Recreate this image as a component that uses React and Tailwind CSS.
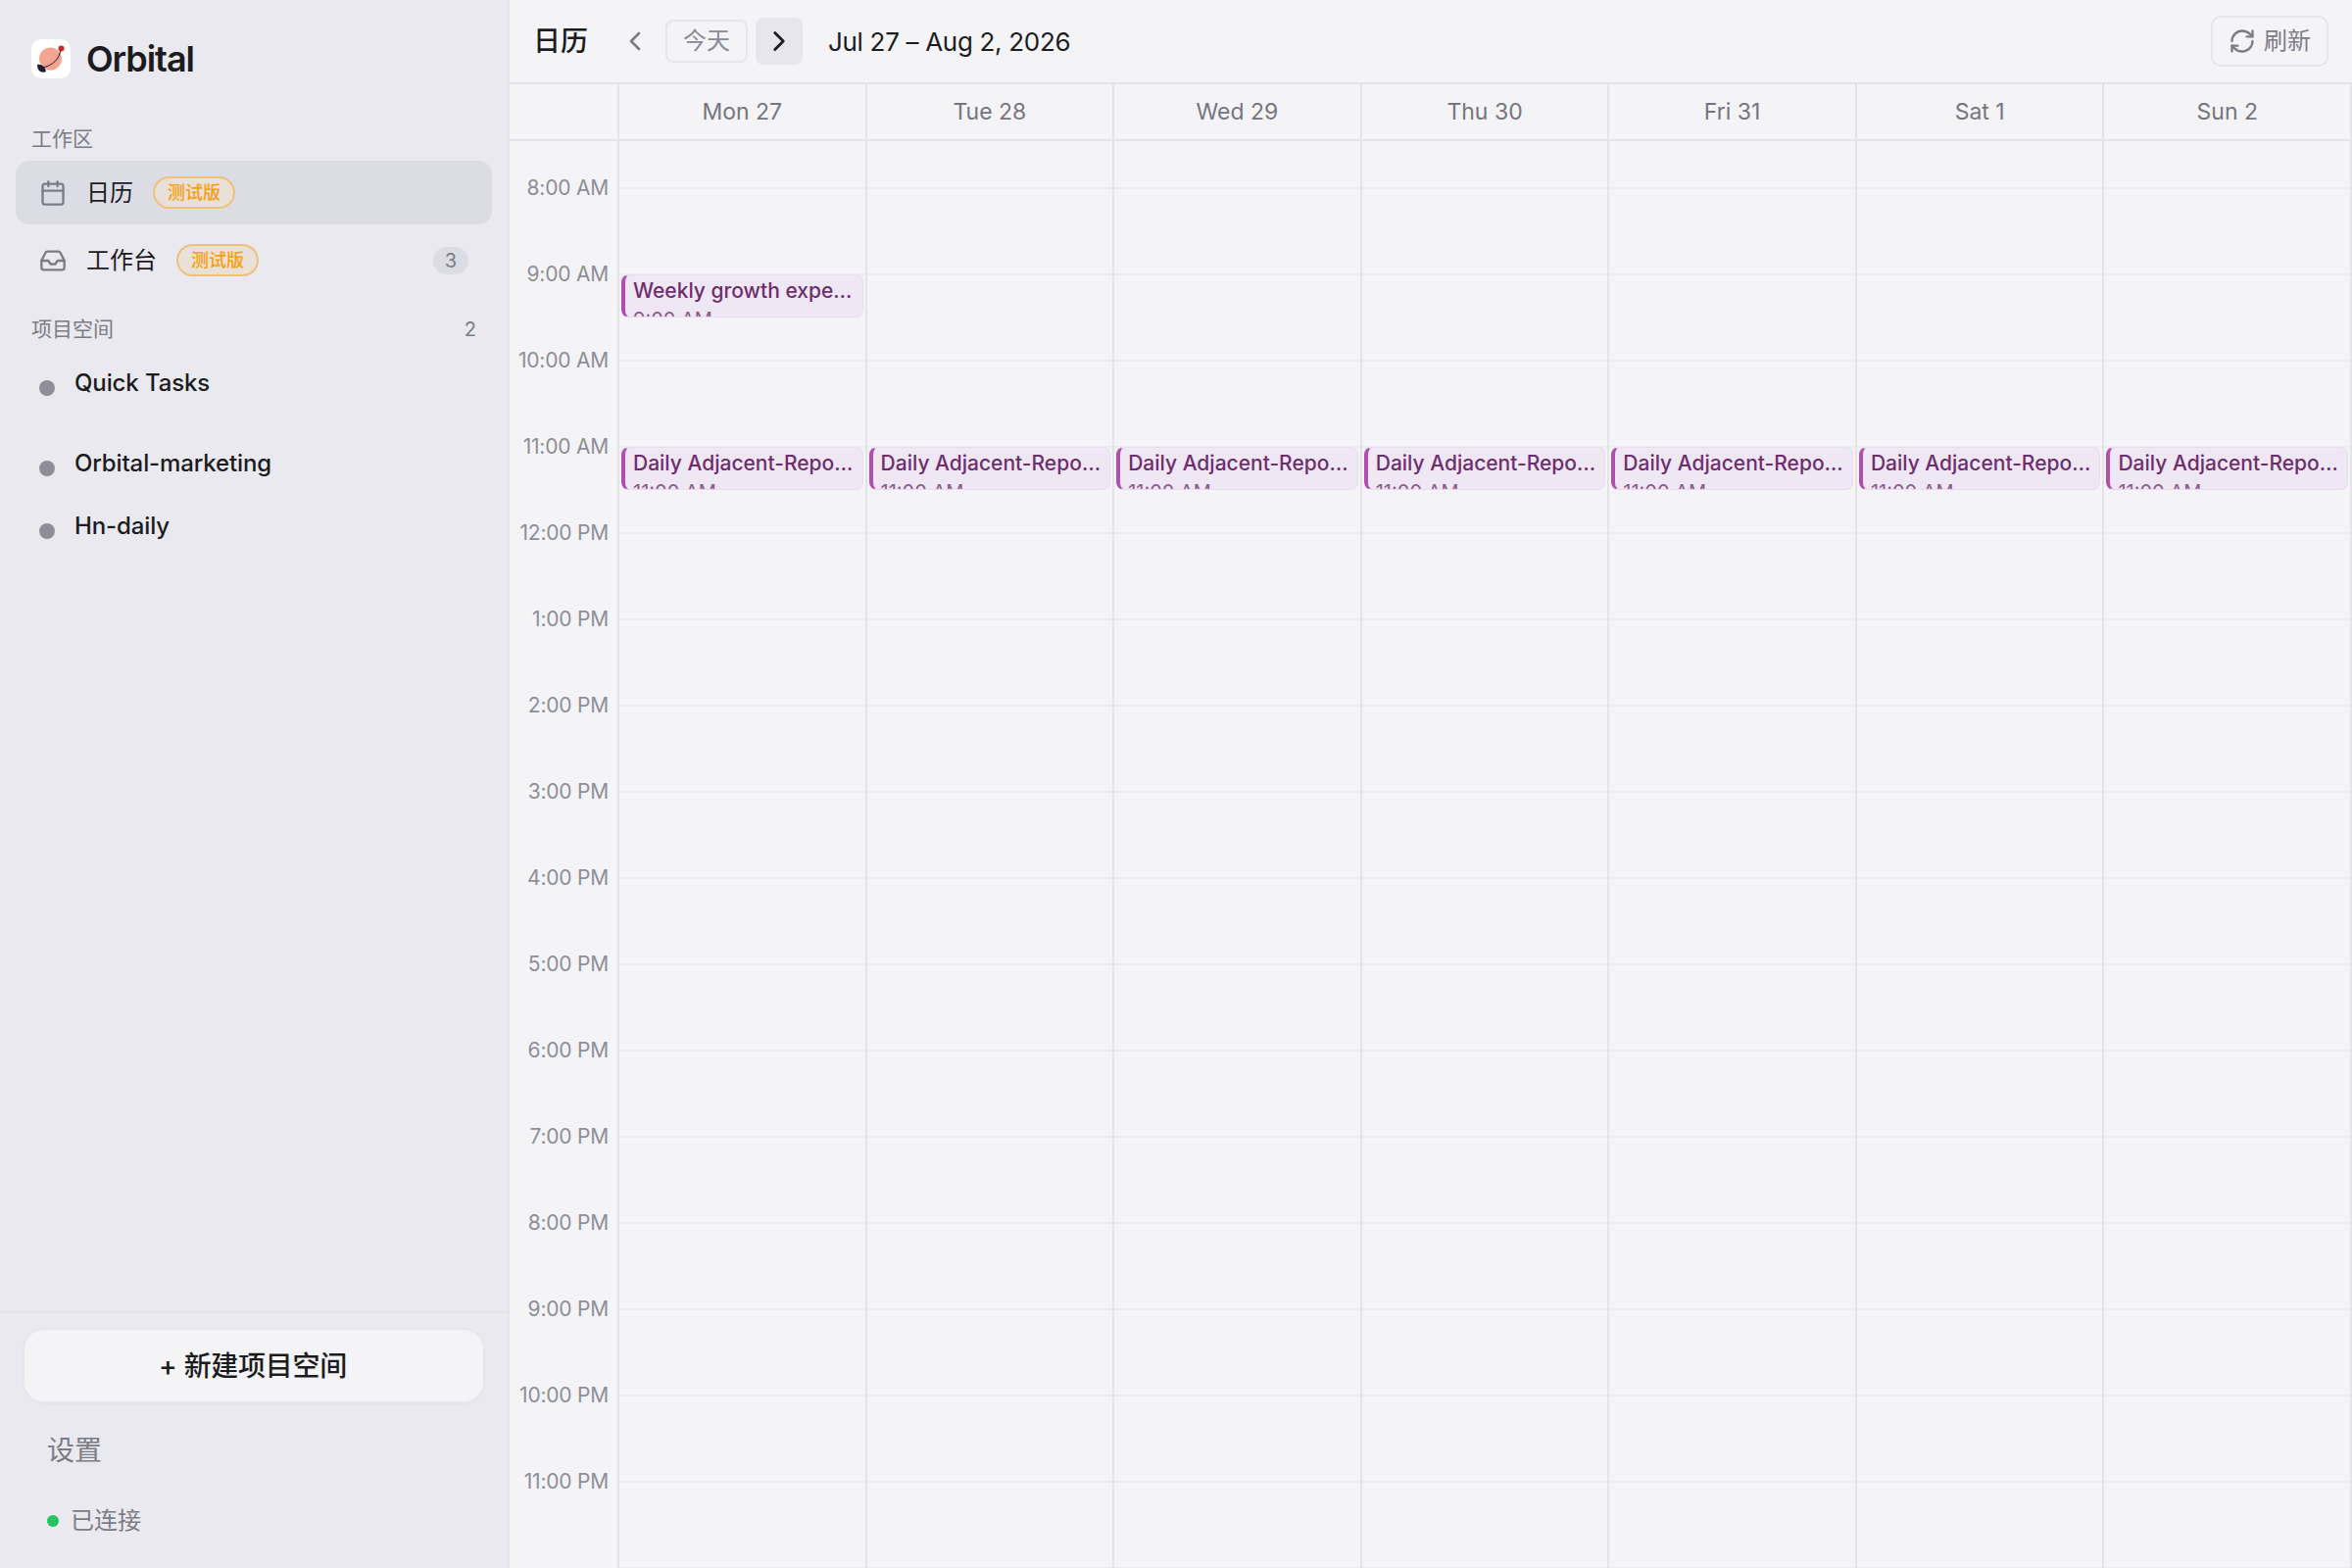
import { Calendar, Inbox, ChevronLeft, ChevronRight, RefreshCw } from 'lucide-react'

const days = ['Mon 27', 'Tue 28', 'Wed 29', 'Thu 30', 'Fri 31', 'Sat 1', 'Sun 2']
const hours = [
  '8:00 AM', '9:00 AM', '10:00 AM', '11:00 AM', '12:00 PM', '1:00 PM', '2:00 PM', '3:00 PM',
  '4:00 PM', '5:00 PM', '6:00 PM', '7:00 PM', '8:00 PM', '9:00 PM', '10:00 PM', '11:00 PM',
]

function Logo() {
  return (
    <svg width="40" height="40" viewBox="0 0 40 40" className="shrink-0">
      <rect width="40" height="40" rx="10" fill="#ffffff" />
      <circle cx="19.5" cy="20" r="11.5" fill="#f4a58f" />
      <path d="M30 10 C29 20 22 27 11 29" fill="none" stroke="#1a1d33" strokeWidth="1" />
      <circle cx="30.5" cy="9.5" r="3" fill="#c9252d" />
      <path d="M6 26 C10 25 14 28 15 33 C11 35 6 33 6 26 Z" fill="#1a1d33" />
    </svg>
  )
}

function BetaBadge() {
  return (
    <span className="flex h-[33px] w-[84px] items-center justify-center rounded-full border-2 border-[#efc078] bg-[#e9e0d8] text-[18px] font-medium text-[#f59e0b]">
      测试版
    </span>
  )
}

function ProjectRow({ name }) {
  return (
    <div className="flex h-16 items-center pl-10 text-[24px] font-medium tracking-[-0.005em] text-[#1c1c1e]">
      <span className="mt-[10px] h-4 w-4 shrink-0 rounded-full bg-[#8e8e98]" />
      <span className="ml-5">{name}</span>
    </div>
  )
}

function Sidebar() {
  return (
    <aside className="flex h-full w-[520px] shrink-0 flex-col border-r-2 border-[#e3e3e8] bg-[#e9e9ef]">
      <div className="flex items-center gap-4 pl-8 pt-10">
        <Logo />
        <span className="text-[36px] leading-10 font-semibold tracking-[-0.03em] text-[#1c1c1e]">Orbital</span>
      </div>

      <div className="mt-12 pl-8 text-[21px] leading-7 text-[#7c7c86]">工作区</div>
      <div className="mt-2 flex flex-col gap-1 px-4">
        <div className="flex h-[65px] items-center rounded-[14px] bg-[#dcdce5] pl-6">
          <Calendar size={28} strokeWidth={2} className="text-[#7c7c86]" />
          <span className="ml-5 text-[24px] text-[#1c1c1e]">日历</span>
          <span className="ml-5"><BetaBadge /></span>
        </div>
        <div className="flex h-[65px] items-center pl-6 pr-6">
          <Inbox size={28} strokeWidth={2} className="text-[#7c7c86]" />
          <span className="ml-5 text-[24px] text-[#1c1c1e]">工作台</span>
          <span className="ml-5"><BetaBadge /></span>
          <span className="ml-auto flex h-7 w-9 items-center justify-center rounded-full bg-[#dcdce5] text-[20px] text-[#7c7c86]">3</span>
        </div>
      </div>

      <div className="mt-6 flex items-center justify-between pl-8 pr-8 text-[21px] leading-7 text-[#7c7c86]">
        <span>项目空间</span>
        <span className="text-[20px]">2</span>
      </div>
      <div className="mt-[9px]">
        <ProjectRow name="Quick Tasks" />
        <div className="mx-4 my-2 h-0.5 bg-[#ececf1]" />
        <ProjectRow name="Orbital-marketing" />
        <ProjectRow name="Hn-daily" />
      </div>

      <div className="mt-auto h-[262px] border-t-2 border-[#e3e3e8] px-[25px] pt-[17px]">
        <button className="h-[73px] w-full rounded-[20px] bg-[#f4f4f7] pr-[2px] text-[28px] font-medium tracking-[-0.01em] text-[#1c1c1e] shadow-[0_0_0_2px_#e6e6eb,0_2px_4px_rgba(0,0,0,0.04)]">
          + 新建项目空间
        </button>
        <div className="mt-5 flex h-[60px] items-center pl-[23px] text-[28px] text-[#7c7c86]">设置</div>
        <div className="mt-[22px] flex h-10 items-center pl-[23px] text-[24px] text-[#7c7c86]">
          <span className="h-3 w-3 rounded-full bg-[#22c55e]" />
          <span className="ml-3">已连接</span>
        </div>
      </div>
    </aside>
  )
}

function EventCard({ title, time, top }) {
  return (
    <div
      style={{ top }}
      className="absolute left-0.5 right-0.5 h-11 overflow-hidden rounded-lg border border-l-4 border-[#e9dcec] border-l-[#b04fb0] bg-[#efe7f3] pl-2 pr-2 leading-none text-[#6d2e6d]"
    >
      <div className="mt-[2px] truncate text-[21px] leading-7 font-medium">{title}</div>
      <div className="mt-[3px] text-[20px] leading-6 text-[#8d5a8d]">{time}</div>
    </div>
  )
}

function DayColumn({ index }) {
  return (
    <div className="relative min-w-0 flex-1 border-l-2 border-[#e3e3e8] last:border-r-2">
      <div className="h-[49px] border-b-2 border-[#ececf0]" />
      {hours.map(h => (
        <div key={h} className="h-[88px] border-b-2 border-[#ececf0]" />
      ))}
      {index === 0 && <EventCard title="Weekly growth experiment" time="9:00 AM" top={136} />}
      <EventCard title="Daily Adjacent-Reporting" time="11:00 AM" top={312} />
    </div>
  )
}

function CalendarView() {
  return (
    <main className="flex h-full min-w-0 flex-1 flex-col bg-[#f4f4f7]">
      {/* Toolbar */}
      <div className="flex h-[84px] shrink-0 items-center pl-6 pr-6">
        <span className="text-[28px] font-medium text-[#1c1c1e]">日历</span>
        <button className="ml-8 flex h-12 w-8 items-center justify-center text-[#7c7c86]">
          <ChevronLeft size={32} strokeWidth={2} />
        </button>
        <button className="ml-[15px] h-11 w-[84px] rounded-lg border-2 border-[#e6e6ea] text-[24px] text-[#8a8a94]">今天</button>
        <button className="ml-2 flex h-12 w-12 items-center justify-center rounded-lg bg-[#e6e6ec] text-[#1c1c1e]">
          <ChevronRight size={34} strokeWidth={2} />
        </button>
        <span className="ml-[26px] text-[26px] tracking-[-0.012em] text-[#1c1c1e]">Jul 27 – Aug 2, 2026</span>
        <button className="ml-auto flex h-[52px] w-[120px] items-center justify-center gap-2 rounded-[10px] border-2 border-[#e6e6ea] text-[24px] text-[#7c7c86]">
          <RefreshCw size={28} strokeWidth={2} />
          刷新
        </button>
      </div>

      {/* Day header */}
      <div className="flex h-[60px] shrink-0 border-y-2 border-[#e3e3e8] pl-[110px]">
        {days.map(d => (
          <div key={d} className="flex flex-1 items-center justify-center border-l-2 border-[#e3e3e8] text-[23px] text-[#75757f] last:border-r-2">
            {d}
          </div>
        ))}
      </div>

      {/* Hour grid */}
      <div className="flex min-h-0 flex-1 overflow-hidden">
        <div className="w-[110px] shrink-0 pt-[34px] pr-[9px] text-right">
          {hours.map(h => (
            <div key={h} className="h-[88px] text-[21px] leading-7 tracking-[-0.01em] text-[#8e8e96]">{h}</div>
          ))}
        </div>
        {days.map((d, i) => (
          <DayColumn key={d} index={i} />
        ))}
      </div>
    </main>
  )
}

export default function App() {
  return (
    <div className="flex h-screen w-screen overflow-hidden font-['Inter','Noto_Sans_CJK_SC',sans-serif]">
      <Sidebar />
      <CalendarView />
    </div>
  )
}
